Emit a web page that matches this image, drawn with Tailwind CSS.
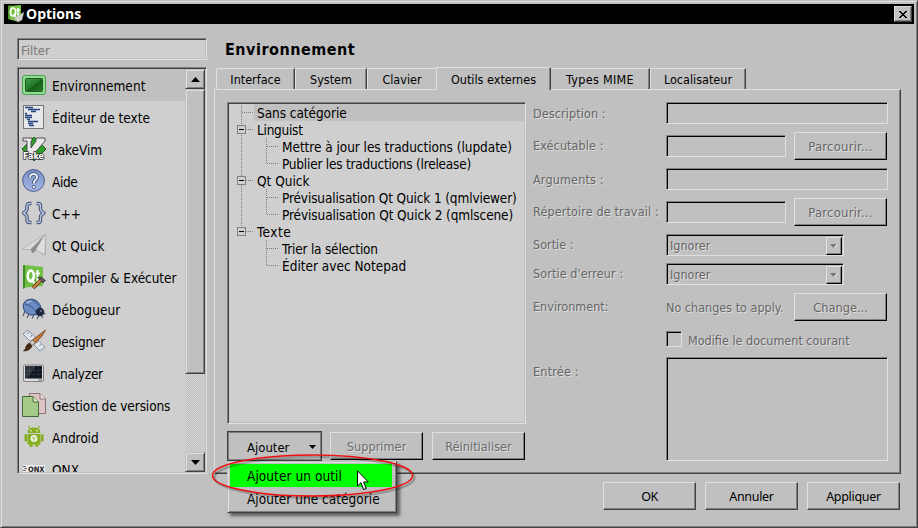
<!DOCTYPE html>
<html lang="fr">
<head>
<meta charset="utf-8">
<title>Options</title>
<script src="https://cdn.jsdelivr.net/npm/@tailwindcss/browser@4"></script>
</head>
<body class="w-[918px] h-[528px] overflow-hidden bg-[#c0c0c0] font-['DejaVu_Sans_Condensed','DejaVu_Sans',sans-serif] text-[13px] leading-4 text-black whitespace-nowrap">
<div class="relative w-[918px] h-[528px] border border-t-[#c0c0c0] border-l-[#c0c0c0] border-r-[#404040] border-b-[#404040] shadow-[inset_1px_1px_#dfdfdf,inset_-1px_-1px_#808080] p-[3px] flex flex-col">

  <!-- Title bar -->
  <header class="h-5 shrink-0 w-[910px] bg-black flex items-center pl-[3px] pr-[2px]">
    <svg class="w-[17px] h-[18px] shrink-0" viewBox="0 0 17 18">
      <path d="M1 1L14 0V15L11 17L1 14Z" fill="#76c043"/><path d="M1 1L3 0L3 13L1 14Z" fill="#4c9a2a"/>
      <ellipse cx="6" cy="7" rx="2.6" ry="4" fill="none" stroke="#fff" stroke-width="1.7"/><path d="M6.5 9L9 12M11 3V10L12.500 10M9.500 5H13" fill="none" stroke="#fff" stroke-width="1.5"/>
      <path d="M17 7L15 15L11 17L9 15L6 14Z" fill="#d4d4cc" stroke="#888" stroke-width=".4"/>
    </svg>
    <h1 class="ml-[2px] grow font-['Open_Sans','Noto_Sans',sans-serif] font-bold text-[14px] leading-5 text-white">Options</h1>
    <button class="w-[18px] h-4 bg-[#c0c0c0] border border-t-[#dfdfdf] border-l-[#dfdfdf] border-r-[#404040] border-b-[#404040] shadow-[inset_-1px_-1px_#808080] flex items-center justify-center">
      <svg class="w-2 h-[7px]" viewBox="0 0 8 7" shape-rendering="crispEdges"><path d="M0 0h2v1h1v1h2v-1h1v-1h2v1h-1v1h-1v1h-1v1h1v1h1v1h1v1h-2v-1h-1v-1h-2v1h-1v1h-2v-1h1v-1h1v-1h1v-1h-1v-1h-1v-1h-1z"/></svg>
    </button>
  </header>

  <div class="flex grow pt-[14px] pl-[13px]">
    <!-- Category column -->
    <aside class="w-[190px] shrink-0">
      <div class="h-[22px] bg-[#cfcfcf] border border-t-[#808080] border-l-[#808080] border-r-[#dfdfdf] border-b-[#dfdfdf] shadow-[inset_1px_1px_#404040,inset_-1px_-1px_#c0c0c0] pl-[3px] pt-[3px] flex items-center text-[13px] text-[#777]">Filter</div>
      <div class="mt-[7px] h-[407px] bg-[#cfcfcf] border border-t-[#808080] border-l-[#808080] border-r-[#dfdfdf] border-b-[#dfdfdf] shadow-[inset_1px_1px_#404040,inset_-1px_-1px_#c0c0c0] p-px flex overflow-hidden">
        <ul class="w-[166px] h-[403px] overflow-hidden text-[13.5px]">
          <li class="h-8 flex items-center gap-1.5 pl-[3px] bg-[#c0c0c0]">
            <svg class="w-6 h-6 shrink-0" viewBox="0 0 24 24"><defs><linearGradient id="gEnv" x2="1" y2="1"><stop stop-color="#42a04a"/><stop offset=".5" stop-color="#23762a"/><stop offset=".52" stop-color="#176018"/><stop offset="1" stop-color="#23782a"/></linearGradient></defs><rect x=".5" y="2.500" width="23" height="19" rx="2.500" fill="#8fdc8f" stroke="#4aa052"/><rect x="3.500" y="5.500" width="17" height="13" rx="1" fill="url(#gEnv)" stroke="#205c24"/></svg>
            <span class="pt-px tracking-[0.06px]">Environnement</span></li>
          <li class="h-8 flex items-center gap-1.5 pl-[3px]">
            <svg class="w-6 h-6 shrink-0" viewBox="0 0 24 24"><rect x="1.500" y=".5" width="20" height="23" fill="#e6e8ea" stroke="#777"/><path d="M3 2.500H11M6 4.500H18M3 8.500H5M3 10.500H10M3 12.500H10M6 16.500H16M6 18.500H11M7 20.500H12M9 6.500H14M5 14.500H8" stroke="#24437f" stroke-width="1.300"/></svg>
            <span class="pt-px">Éditeur de texte</span></li>
          <li class="h-8 flex items-center gap-1.5 pl-[3px]">
            <svg class="w-6 h-6 shrink-0" viewBox="0 0 24 24"><path d="M12 0L24 12L12 24L0 12Z" fill="#2fa02a" stroke="#145c14"/><path d="M1 1H10V4H9V11L14 4V1H23V4L11 18H5V4H1Z" fill="#e9e9e9" stroke="#444" stroke-width=".9"/><text x="1" y="21.500" textLength="21" lengthAdjust="spacingAndGlyphs" font-family="DejaVu Sans" font-size="9" font-weight="bold" fill="#fff" stroke="#333" stroke-width="1.600" paint-order="stroke">Fake</text></svg>
            <span class="pt-px tracking-[-0.05px]">FakeVim</span></li>
          <li class="h-8 flex items-center gap-1.5 pl-[3px]">
            <svg class="w-6 h-6 shrink-0" viewBox="0 0 24 24"><defs><linearGradient id="gHelp" x2="0" y2="1"><stop stop-color="#7890c8"/><stop offset="1" stop-color="#a4b8e4"/></linearGradient></defs><circle cx="11.500" cy="11.500" r="10.900" fill="url(#gHelp)" stroke="#4c5c84"/><path d="M8 8.500Q8 5 11.500 5Q15 5 15 8.200Q15 10 13 11.500Q11.800 12.500 11.800 14.500" fill="none" stroke="#3e4c70" stroke-width="3.600"/><circle cx="11.700" cy="18" r="2" fill="#3e4c70"/><path d="M8 8.500Q8 5 11.500 5Q15 5 15 8.200Q15 10 13 11.500Q11.800 12.500 11.800 14.500" fill="none" stroke="#e8ecf6" stroke-width="2"/><circle cx="11.700" cy="18" r="1.200" fill="#e8ecf6"/></svg>
            <span class="pt-px tracking-[-0.4px]">Aide</span></li>
          <li class="h-8 flex items-center gap-1.5 pl-[3px]">
            <svg class="w-6 h-6 shrink-0" viewBox="0 0 24 24" fill="none" stroke-linejoin="round"><path d="M9.500 2.500H7.500Q5 2.500 5 5V8Q5 10 1.500 12Q5 14 5 16V19Q5 21.500 7.500 21.500H9.500M14.500 2.500H16Q18.500 2.500 18.500 5V8Q18.500 10 22 12Q18.500 14 18.500 16V19Q18.500 21.500 16 21.500H14.500" stroke="#3e4d6e" stroke-width="3.400"/><path d="M9.500 2.500H7.500Q5 2.500 5 5V8Q5 10 1.500 12Q5 14 5 16V19Q5 21.500 7.500 21.500H9.500M14.500 2.500H16Q18.500 2.500 18.500 5V8Q18.500 10 22 12Q18.500 14 18.500 16V19Q18.500 21.500 16 21.500H14.500" stroke="#b4c2e0" stroke-width="1.500"/></svg>
            <span class="pt-px">C++</span></li>
          <li class="h-8 flex items-center gap-1.5 pl-[3px]">
            <svg class="w-6 h-6 shrink-0" viewBox="0 0 24 24" stroke-linejoin="round"><path d="M23 1.500V22L14.500 17L10.500 20L9 16L.5 16Z" fill="#c8c8c8" stroke="#8a8a8a" stroke-width=".8"/><path d="M23 1.500L9 16L.5 16Z" fill="#dadada"/><path d="M23 1.500L13 17.500L10.500 20L9 16Z" fill="#8c8c8c"/><path d="M23 1.500L14.500 17L22.500 21.500Z" fill="#dedede"/></svg>
            <span class="pt-px">Qt Quick</span></li>
          <li class="h-8 flex items-center gap-1.5 pl-[3px]">
            <svg class="w-6 h-6 shrink-0" viewBox="0 0 24 24"><path d="M1 .5L3 0L21 2V21L3 22.500L1 24Z" fill="#6fc044"/><path d="M1 .5L3 0V22.500L1 24Z" fill="#3b8a24"/><ellipse cx="8.800" cy="11" rx="3" ry="5.600" fill="none" stroke="#fff" stroke-width="2.500"/><path d="M9 14L12.500 18.500M15.500 5V15Q15.500 17 18 16M13.500 8.500H18" fill="none" stroke="#fff" stroke-width="2"/><path d="M11 23L20 14" stroke="#5c3010" stroke-width="3.600"/><path d="M11 23L20 14" stroke="#d48a4c" stroke-width="2"/><path d="M15.500 12.500Q19 11 21 13.500L23.500 15.500L21 18L19 15.500Q18 13.500 15.500 12.500Z" fill="#5a5a5a" stroke="#222" stroke-width=".6"/></svg>
            <span class="pt-px tracking-[-0.05px]">Compiler &amp; Exécuter</span></li>
          <li class="h-8 flex items-center gap-1.5 pl-[3px]">
            <svg class="w-6 h-6 shrink-0" viewBox="0 0 24 24"><path d="M3 14L1 19M7 17L5 21M12 18L10 21.500M17 18L15 22M19 18L21 21M21 16L23.500 17" stroke="#555e70" stroke-width="1.200" fill="none"/><path d="M2 13Q-.5 6 5 3Q10 .5 15 4Q20 8 19 14Q15 19 9 18Q4 17 2 13Z" fill="#6d8cc4" stroke="#304878"/><path d="M3 7Q11 8 15 17M9 2.500Q16 6 18 12" fill="none" stroke="#304878" stroke-width=".8"/><path d="M5 5Q8 2.500 11 4Q8 4 5 7Z" fill="#b0c4e8"/><circle cx="18" cy="15" r="4.300" fill="#1e2a40"/><circle cx="19" cy="14" r="1" fill="#6e7c98"/></svg>
            <span class="pt-px tracking-[0.1px]">Débogueur</span></li>
          <li class="h-8 flex items-center gap-1.5 pl-[3px]">
            <svg class="w-6 h-6 shrink-0" viewBox="0 0 24 24"><path d="M1 5L6 1L23 18L18 22Z" fill="#dfe3ea" stroke="#8088a0" stroke-width=".9"/><path d="M7 3L5.500 5M10 6L8.500 8M13 9L11.500 11M16 12L14.500 14M19 15L17.500 17" stroke="#8088a0"/><path d="M23.500 1L21 3L9 12L12 15.500L20 7Z" fill="#c87838" stroke="#5a3010" stroke-width=".7"/><path d="M10.500 11L13 14L10 16.500L7.500 14Z" fill="#d0d0d0" stroke="#666" stroke-width=".6"/><path d="M7.500 14L10 17Q8 22 1.500 22Q4 20 4 17.500Q5 15 7.500 14Z" fill="#4c2810" stroke="#28140a" stroke-width=".6"/></svg>
            <span class="pt-px tracking-[-0.15px]">Designer</span></li>
          <li class="h-8 flex items-center gap-1.5 pl-[3px]">
            <svg class="w-6 h-6 shrink-0" viewBox="0 0 24 24"><rect x="1.500" y="4" width="20" height="16.500" rx="1.500" fill="#dedede" stroke="#777" stroke-width=".9"/><rect x="3" y="5" width="17" height="12.500" fill="#10161c"/><path d="M3 9.500H20M3 13.500H20M7.500 5V17.500M12 5V17.500M16.500 5V17.500" stroke="#2a4250" stroke-width=".5"/><path d="M3 5H14L5 17.500H3Z" fill="#fff" opacity=".13"/><path d="M16 19H20" stroke="#777"/></svg>
            <span class="pt-px tracking-[-0.25px]">Analyzer</span></li>
          <li class="h-8 flex items-center gap-1.5 pl-[3px]">
            <svg class="w-6 h-6 shrink-0" viewBox="0 0 24 24" stroke-linejoin="round"><path d="M7.500 .5H18L23.500 6V20.500H7.500Z" fill="#dfc4c6" stroke="#8a7476"/><path d="M18 .5V6H23.500" fill="#eedddd" stroke="#8a7476"/><path d="M.5 3.500H11L16.500 9V23.500H.5Z" fill="#a4cc88" stroke="#47663a"/><path d="M11 3.500V9H16.500" fill="#d4ecc4" stroke="#47663a"/></svg>
            <span class="pt-px tracking-[-0.1px]">Gestion de versions</span></li>
          <li class="h-8 flex items-center gap-1.5 pl-[3px]">
            <svg class="w-6 h-6 shrink-0" viewBox="0 0 24 24" fill="#86b022"><path d="M5.500 8Q5.500 2.500 12 2.500Q18.500 2.500 18.500 8Z"/><path d="M8 3.500L6.500 1M16 3.500L17.500 1" stroke="#86b022" stroke-width="1.200"/><rect x="5.500" y="9" width="13" height="10.500" rx="1"/><rect x="2.500" y="9" width="2.600" height="7.500" rx="1.300"/><rect x="19" y="9" width="2.600" height="7.500" rx="1.300"/><rect x="7.500" y="17" width="3.200" height="5" rx="1.300"/><rect x="13.300" y="17" width="3.200" height="5" rx="1.300"/><circle cx="9" cy="5.700" r=".8" fill="#fff"/><circle cx="15" cy="5.700" r=".8" fill="#fff"/><circle cx="12" cy="13.500" r="3.400" fill="#f2f4ea"/><path d="M10 12L12 13.500L14 12M12 13.500V16" stroke="#86b022" stroke-width=".9" fill="none"/></svg>
            <span class="pt-px tracking-[-0.05px]">Android</span></li>
          <li class="h-8 flex items-center gap-1.5 pl-[3px]">
            <svg class="w-6 h-6 shrink-0" viewBox="0 0 24 24"><rect x="1" y="8" width="22" height="8" fill="#eee"/><path d="M1 9.500H4M2 11.500H5M1 13.500H4" stroke="#666"/><text x="6" y="15" textLength="16.500" lengthAdjust="spacingAndGlyphs" font-family="DejaVu Sans" font-size="7.500" font-weight="bold" fill="#222">QNX</text></svg>
            <span class="pt-px">QNX</span></li>
        </ul>
        <div class="w-5 h-[403px] flex flex-col bg-[repeating-conic-gradient(#c0c0c0_0_25%,#d4d4d4_0_50%)] bg-[length:2px_2px]">
          <div class="h-5 shrink-0 bg-[#c0c0c0] border border-t-[#c0c0c0] border-l-[#c0c0c0] border-r-[#404040] border-b-[#404040] shadow-[inset_1px_1px_#dfdfdf,inset_-1px_-1px_#808080] flex items-center justify-center"><svg class="w-[9px] h-[5px]" viewBox="0 0 9 5"><path d="M0 5L4.500 0L9 5Z"/></svg></div>
          <div class="h-[285px] shrink-0 bg-[#c0c0c0] border border-t-[#c0c0c0] border-l-[#c0c0c0] border-r-[#404040] border-b-[#404040] shadow-[inset_1px_1px_#dfdfdf,inset_-1px_-1px_#808080]"></div>
          <div class="mt-auto h-5 shrink-0 bg-[#c0c0c0] border border-t-[#c0c0c0] border-l-[#c0c0c0] border-r-[#404040] border-b-[#404040] shadow-[inset_1px_1px_#dfdfdf,inset_-1px_-1px_#808080] flex items-center justify-center"><svg class="w-[9px] h-[5px]" viewBox="0 0 9 5"><path d="M0 0H9L4.500 5Z"/></svg></div>
        </div>
      </div>
    </aside>

    <!-- Settings page -->
    <main class="ml-[7px] w-[687px] shrink-0 flex flex-col">
      <h2 class="h-[29px] pl-[11px] font-bold text-[16px] tracking-[0.5px] leading-6">Environnement</h2>
      <nav class="relative z-10 h-[23px] flex items-end pl-[2px] text-[12.5px] -mb-px">
        <div class="w-[79px] h-[21px] mb-px pt-0.5 rounded-tl-[2px] border-t border-l border-[#dfdfdf] border-r-[#404040] border-r shadow-[inset_-1px_0_#808080] flex items-center justify-center">Interface</div>
        <div class="w-[72px] h-[21px] mb-px pt-0.5 rounded-tl-[2px] border-t border-l border-[#dfdfdf] border-r-[#404040] border-r shadow-[inset_-1px_0_#808080] flex items-center justify-center">System</div>
        <div class="w-[69px] h-[21px] mb-px pt-0.5 rounded-tl-[2px] border-t border-l border-[#dfdfdf] flex items-center justify-center">Clavier</div>
        <div class="w-[115px] h-[23px] pt-0.5 rounded-tl-[2px] border-t border-l border-[#dfdfdf] border-r-[#404040] border-r shadow-[inset_-1px_0_#808080] bg-[#c0c0c0] flex items-center justify-center">Outils externes</div>
        <div class="w-[99px] h-[21px] mb-px pt-0.5 border-t border-[#dfdfdf] border-r-[#404040] border-r shadow-[inset_-1px_0_#808080] flex items-center justify-center tracking-[0.3px]">Types MIME</div>
        <div class="w-24 h-[21px] mb-px pt-0.5 rounded-tl-[2px] border-t border-l border-[#dfdfdf] border-r-[#404040] border-r shadow-[inset_-1px_0_#808080] flex items-center justify-center">Localisateur</div>
      </nav>

      <section class="h-[385px] shrink-0 border border-t-[#dfdfdf] border-l-[#dfdfdf] border-r-[#404040] border-b-[#404040] shadow-[inset_-1px_-1px_#808080] pt-3 pl-3 flex">
        <div class="w-[299px] shrink-0">
          <div class="h-[322px] bg-[#cfcfcf] border border-t-[#808080] border-l-[#808080] border-r-[#dfdfdf] border-b-[#dfdfdf] shadow-[inset_1px_1px_#404040,inset_-1px_-1px_#c0c0c0] pt-px pl-px pr-px text-[13.5px]">
            <div class="flex">
              <!-- Branch lines -->
              <svg class="w-[25px] h-[170px] shrink-0" viewBox="0 0 25 170" fill="none" shape-rendering="crispEdges">
                <path d="M12.500 1V127M13 8.500H25M17 25.500H25M17 76.500H25M17 127.500H25" stroke="#808080" stroke-dasharray="1 1"/>
                <path d="M8.500 21.500h8v8h-8zM8.500 72.500h8v8h-8zM8.500 123.500h8v8h-8z" fill="#cfcfcf" stroke="#808080"/>
                <path d="M10 25.500h5M10 76.500h5M10 127.500h5" stroke="#000"/>
              </svg>
              <div class="grow leading-[19px]">
                <div class="h-[17px] bg-[#c0c0c0] pl-[3px] tracking-[-0.05px]">Sans catégorie</div>
                <div class="h-[17px] pl-[3px] tracking-[-0.25px]">Linguist</div>
                <div class="flex pl-3"><svg class="w-4 h-[34px] shrink-0" viewBox="0 0 16 34" fill="none" shape-rendering="crispEdges"><path d="M.5 0V26M1 8.500H13M1 25.500H13" stroke="#808080" stroke-dasharray="1 1"/></svg>
                  <div><div class="h-[17px] tracking-[-0.04px]">Mettre à jour les traductions (lupdate)</div><div class="h-[17px] tracking-[-0.22px]">Publier les traductions (lrelease)</div></div></div>
                <div class="h-[17px] pl-[3px]">Qt Quick</div>
                <div class="flex pl-3"><svg class="w-4 h-[34px] shrink-0" viewBox="0 0 16 34" fill="none" shape-rendering="crispEdges"><path d="M.5 0V26M1 8.500H13M1 25.500H13" stroke="#808080" stroke-dasharray="1 1"/></svg>
                  <div><div class="h-[17px] tracking-[-0.13px]">Prévisualisation Qt Quick 1 (qmlviewer)</div><div class="h-[17px] tracking-[-0.1px]">Prévisualisation Qt Quick 2 (qmlscene)</div></div></div>
                <div class="h-[17px] pl-[3px] tracking-[0.5px]">Texte</div>
                <div class="flex pl-3"><svg class="w-4 h-[34px] shrink-0" viewBox="0 0 16 34" fill="none" shape-rendering="crispEdges"><path d="M.5 0V26M1 8.500H13M1 25.500H13" stroke="#808080" stroke-dasharray="1 1"/></svg>
                  <div><div class="h-[17px] tracking-[-0.2px]">Trier la sélection</div><div class="h-[17px]">Éditer avec Notepad</div></div></div>
              </div>
            </div>
          </div>
          <div class="mt-[7px] flex items-center text-[13px]">
            <button class="w-[95px] h-[30px] border border-[#404040] shadow-[inset_1px_1px_#808080,inset_-1px_-1px_#808080] flex items-center pl-[19px] pt-[3px]"><span>Ajouter</span><svg class="ml-auto mr-[5px] mb-0.5 w-[7px] h-1" viewBox="0 0 7 4"><path d="M0 0H7L3.500 4Z"/></svg></button>
            <button class="ml-2 w-[93px] h-7 pt-px border border-t-[#dfdfdf] border-l-[#dfdfdf] border-r-black border-b-black shadow-[inset_-1px_-1px_#808080] text-[12.7px] text-[#6c6c6c] text-shadow-[1px_1px_#dfdfdf]">Supprimer</button>
            <button class="ml-[9px] w-[93px] h-7 pt-px border border-t-[#dfdfdf] border-l-[#dfdfdf] border-r-black border-b-black shadow-[inset_-1px_-1px_#808080] text-[12.700px] text-[#6c6c6c] text-shadow-[1px_1px_#dfdfdf]">Réinitialiser</button>
          </div>
        </div>

        <!-- Tool details, disabled -->
        <form class="ml-[7px] w-[355px] shrink-0 text-[12.5px] text-[#666] text-shadow-[1px_1px_#dfdfdf]">
          <div class="h-[22px] flex items-center"><label class="w-[133px] pt-0.5 tracking-[0.1px]">Description :</label><div class="w-[222px] h-[22px] border border-t-[#808080] border-l-[#808080] border-r-[#dfdfdf] border-b-[#dfdfdf] shadow-[inset_1px_1px_#000]"></div></div>
          <div class="mt-2 h-7 flex items-center"><label class="w-[133px] tracking-[0.1px]">Exécutable :</label><div class="w-[120px] h-[22px] border border-t-[#808080] border-l-[#808080] border-r-[#dfdfdf] border-b-[#dfdfdf] shadow-[inset_1px_1px_#000]"></div><div class="ml-2 w-[93px] h-7 border border-t-[#dfdfdf] border-l-[#dfdfdf] border-r-black border-b-black shadow-[inset_-1px_-1px_#808080] flex items-center justify-center text-[13px] pt-0.5 tracking-[0.2px]">Parcourir...</div></div>
          <div class="mt-2 h-[22px] flex items-center"><label class="w-[133px] pt-0.5 tracking-[0.15px]">Arguments :</label><div class="w-[222px] h-[22px] border border-t-[#808080] border-l-[#808080] border-r-[#dfdfdf] border-b-[#dfdfdf] shadow-[inset_1px_1px_#000]"></div></div>
          <div class="mt-2 h-7 flex items-center"><label class="w-[133px] tracking-[0.13px]">Répertoire de travail :</label><div class="w-[120px] h-[22px] border border-t-[#808080] border-l-[#808080] border-r-[#dfdfdf] border-b-[#dfdfdf] shadow-[inset_1px_1px_#000]"></div><div class="ml-2 w-[93px] h-7 border border-t-[#dfdfdf] border-l-[#dfdfdf] border-r-black border-b-black shadow-[inset_-1px_-1px_#808080] flex items-center justify-center text-[13px] pt-0.5 tracking-[0.2px]">Parcourir...</div></div>
          <div class="mt-2 h-[22px] flex items-center"><label class="w-[133px]">Sortie :</label><div class="w-[178px] h-[22px] border border-t-[#808080] border-l-[#808080] border-r-[#dfdfdf] border-b-[#dfdfdf] shadow-[inset_1px_1px_#000] flex items-center pl-[3px] pr-px pt-px"><span class="grow text-[12.500px]">Ignorer</span><span class="w-4 h-[18px] border border-t-[#dfdfdf] border-l-[#dfdfdf] border-r-black border-b-black shadow-[inset_-1px_-1px_#808080] flex items-center justify-center"><svg class="w-2 h-1" viewBox="0 0 8 4"><path d="M0 0H7L3.500 4Z" fill="#777"/><path d="M7.500 0L4 4" stroke="#eee"/></svg></span></div></div>
          <div class="mt-[7px] h-[22px] flex items-center"><label class="w-[133px] tracking-[0.1px]">Sortie d'erreur :</label><div class="w-[178px] h-[22px] border border-t-[#808080] border-l-[#808080] border-r-[#dfdfdf] border-b-[#dfdfdf] shadow-[inset_1px_1px_#000] flex items-center pl-[3px] pr-px pt-px"><span class="grow text-[12.500px]">Ignorer</span><span class="w-4 h-[18px] border border-t-[#dfdfdf] border-l-[#dfdfdf] border-r-black border-b-black shadow-[inset_-1px_-1px_#808080] flex items-center justify-center"><svg class="w-2 h-1" viewBox="0 0 8 4"><path d="M0 0H7L3.500 4Z" fill="#777"/><path d="M7.500 0L4 4" stroke="#eee"/></svg></span></div></div>
          <div class="mt-2 h-7 flex items-center"><label class="w-[133px]">Environment:</label><span class="w-[120px] pt-0.5">No changes to apply.</span><div class="ml-2 w-[93px] h-7 border border-t-[#dfdfdf] border-l-[#dfdfdf] border-r-black border-b-black shadow-[inset_-1px_-1px_#808080] flex items-center justify-center text-[12.700px] pt-0.5">Change...</div></div>
          <div class="mt-[10px] h-[18px] pl-[133px] flex"><span class="w-4 h-4 border border-t-[#808080] border-l-[#808080] border-r-[#dfdfdf] border-b-[#dfdfdf] shadow-[inset_1px_1px_#000]"></span><span class="ml-1.5 pt-0.5">Modifie le document courant</span></div>
          <div class="mt-2 flex"><label class="w-[133px] pt-[7px] tracking-[0.2px]">Entrée :</label><div class="w-[222px] h-[104px] border border-t-[#808080] border-l-[#808080] border-r-[#dfdfdf] border-b-[#dfdfdf] shadow-[inset_1px_1px_#000]"></div></div>
        </form>
      </section>

      <footer class="mt-2 flex justify-end gap-[9px] pr-px font-['Noto_Sans',sans-serif] text-[12.5px]">
        <button class="w-[93px] h-7 pt-px border border-t-[#dfdfdf] border-l-[#dfdfdf] border-r-[#404040] border-b-[#404040] shadow-[inset_-1px_-1px_#808080] tracking-[-0.5px]">OK</button>
        <button class="w-[93px] h-7 pt-px border border-t-[#dfdfdf] border-l-[#dfdfdf] border-r-[#404040] border-b-[#404040] shadow-[inset_-1px_-1px_#808080] tracking-[-0.3px]">Annuler</button>
        <button class="w-[93px] h-7 pt-px border border-t-[#dfdfdf] border-l-[#dfdfdf] border-r-[#404040] border-b-[#404040] shadow-[inset_-1px_-1px_#808080] tracking-[-0.3px]">Appliquer</button>
      </footer>
    </main>
  </div>

  <!-- Drop-down menu, callout ring and pointer -->
  <div class="absolute z-20 left-[226px] top-[460px] w-[170px] h-[52px] bg-[#c0c0c0] border border-t-[#c0c0c0] border-l-[#c0c0c0] border-r-[#404040] border-b-[#404040] shadow-[inset_1px_1px_#dfdfdf,inset_-1px_-1px_#808080,3px_3px_3px_rgba(0,0,0,0.5)] pt-[2px] px-[2px] text-[13.5px]">
    <div class="h-[23px] w-[162px] bg-[#00ff00] pl-[17px] leading-[25px] tracking-[0.07px]">Ajouter un outil</div>
    <div class="h-[23px] pl-[17px] leading-[25px] tracking-[0.04px]">Ajouter une catégorie</div>
  </div>
  <svg class="absolute z-30 left-[205px] top-[448px] w-[216px] h-[56px]" viewBox="0 0 216 56" fill="none">
    <ellipse cx="108.500" cy="28.500" rx="100" ry="20.500" stroke="#000" stroke-opacity=".22" stroke-width="2.500"/>
    <ellipse cx="106.500" cy="26.500" rx="100" ry="20.500" stroke="#f00d0d" stroke-width="1.500"/>
  </svg>
  <svg class="absolute z-40 left-[356px] top-[469px] w-3 h-[21px]" viewBox="0 0 12 21"><path d="M.5 .8V16L4 12.700L6.500 19.500L9.200 18.500L6.600 12H11.300Z" fill="#fff" stroke="#000"/></svg>
</div>
</body>
</html>
